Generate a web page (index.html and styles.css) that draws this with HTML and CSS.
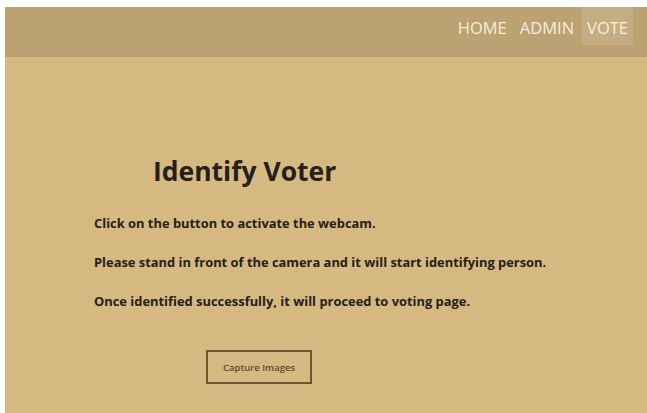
FILE: index.html
```html
<!DOCTYPE html>
<html lang="en">
<head>
<meta charset="utf-8">
<title>Identify Voter</title>
<link rel="stylesheet" href="styles.css">
</head>
<body>
<div class="page">
  <header class="topbar">
    <nav class="menu">
      <a class="menu-link" href="#">HOME</a>
      <a class="menu-link" href="#">ADMIN</a>
      <a class="menu-link active" href="#">VOTE</a>
    </nav>
  </header>
  <main class="content">
    <h1 class="title">Identify Voter</h1>
    <p class="note">Click on the button to activate the webcam.</p>
    <p class="note">Please stand in front of the camera and it will start identifying person.</p>
    <p class="note">Once identified successfully, it will proceed to voting page.</p>
    <div class="actions">
      <button class="capture" type="button">Capture Images</button>
    </div>
  </main>
</div>
</body>
</html>
```

FILE: styles.css
```css
html, body {
  margin: 0;
  padding: 0;
  background: #ffffff;
  height: 100%;
}

body {
  padding: 7px 0 0 5px;
  box-sizing: border-box;
  font-family: "Open Sans", "Noto Sans", sans-serif;
}

.page {
  display: flex;
  flex-direction: column;
  height: 100%;
  background: #d5b980;
}

.topbar {
  height: 50px;
  background: #bca272;
  display: flex;
  justify-content: flex-end;
  align-items: flex-start;
  padding-right: 14px;
  flex-shrink: 0;
}

.menu {
  display: flex;
  gap: 3px;
}

.menu-link {
  display: block;
  height: 38px;
  line-height: 42px;
  padding: 0 5px;
  font-size: 16.5px;
  color: #f6eed8;
  text-decoration: none;
}

.menu-link.active {
  background: #c4ad82;
}

.content {
  flex: 1;
  padding: 0 0 0 89px;
  color: #24201c;
}

.title {
  margin: 96px 0 0 59px;
  font-size: 26.5px;
  font-weight: 700;
  line-height: 36px;
}

.note {
  margin: 23px 0 0 0;
  font-size: 12.9px;
  font-weight: 700;
  line-height: 22px;
}

.note + .note {
  margin-top: 17px;
}

.actions {
  margin: 38px 0 0 112px;
}

.capture {
  width: 106px;
  height: 34px;
  background: transparent;
  border: 2px solid #6c5533;
  color: #5a4a35;
  font-family: "Open Sans", "Noto Sans", sans-serif;
  font-size: 9.5px;
  font-weight: 600;
  padding: 0;
}
```
